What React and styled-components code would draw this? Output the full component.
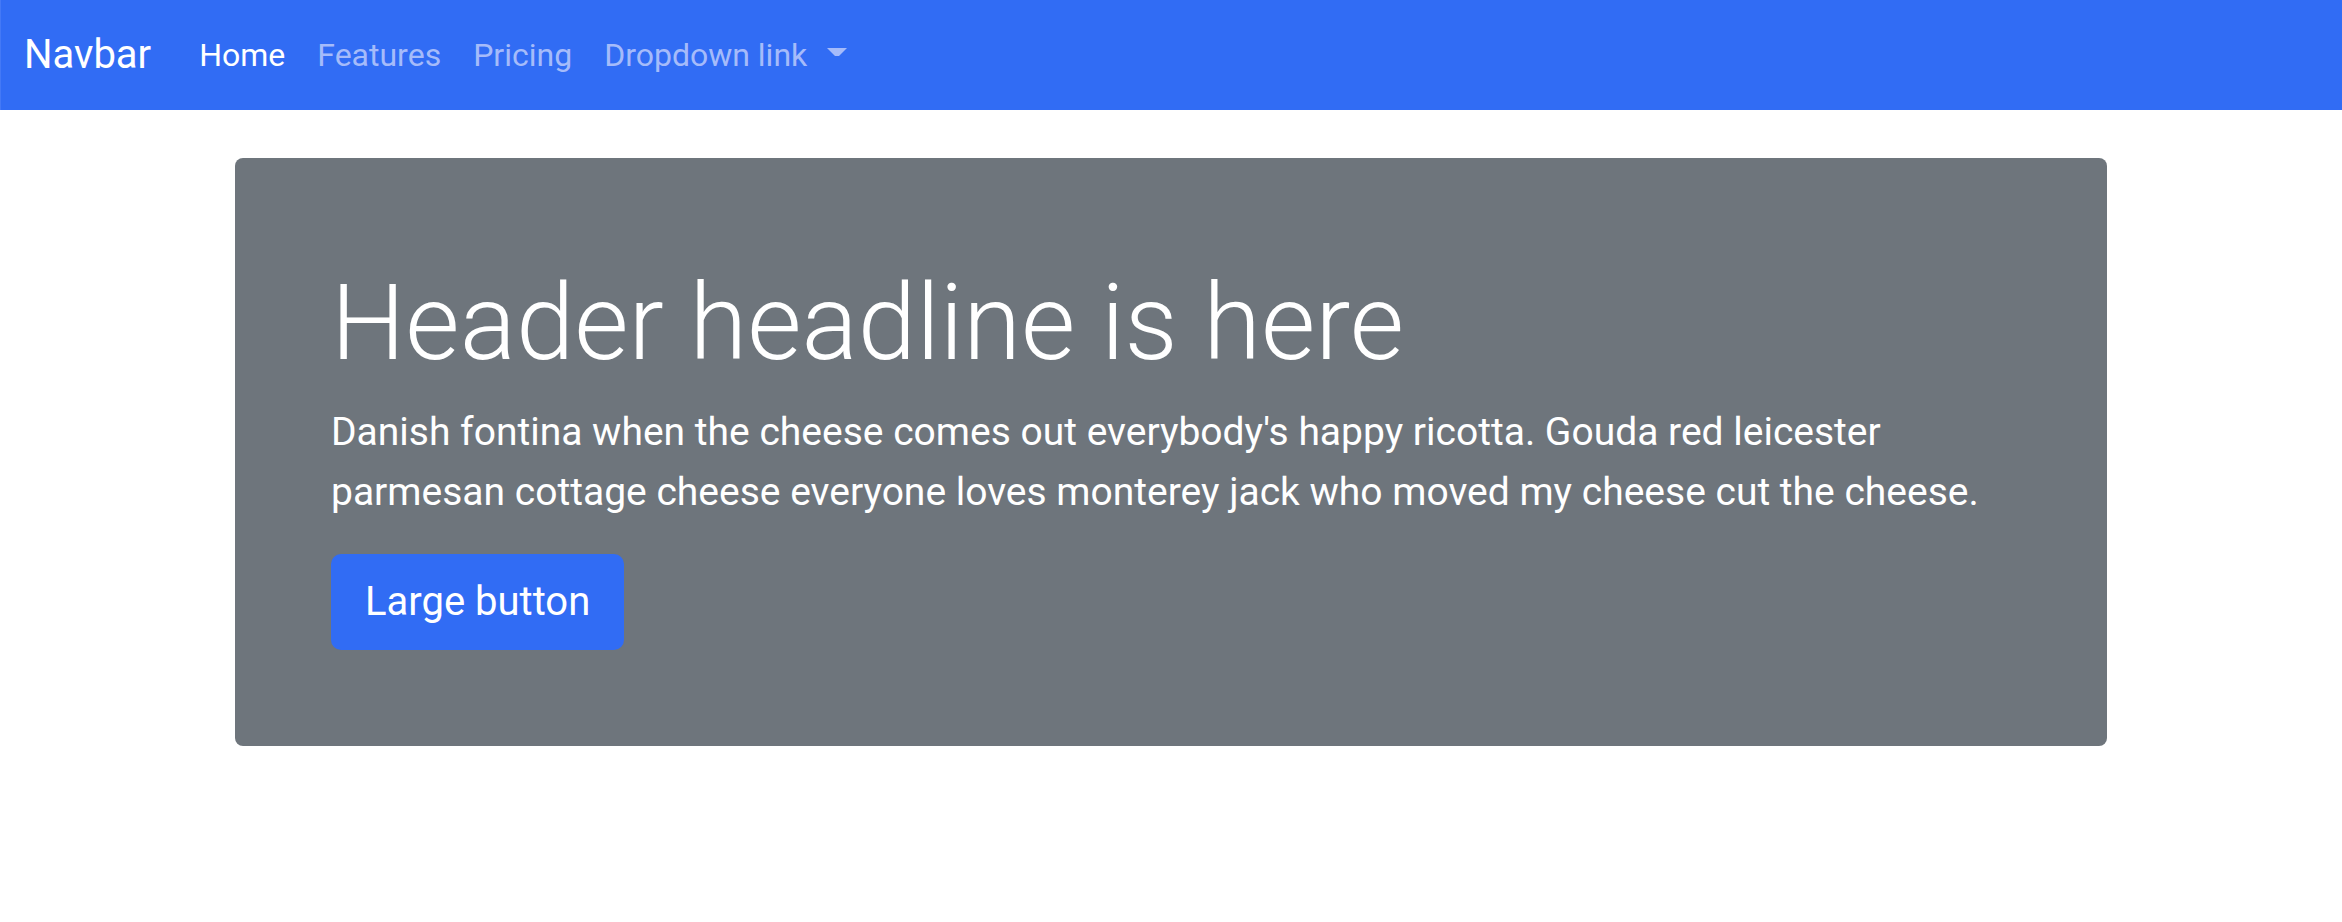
import React from "react";
import styled, { createGlobalStyle } from "styled-components";

const Global = createGlobalStyle`
  *, *::before, *::after { box-sizing: border-box; }
  body {
    margin: 0;
    background: #fff;
    color: #fff;
    font-family: Roboto, "Liberation Sans", sans-serif;
    font-size: 32px;
    line-height: 48px;
  }
`;

const Navbar = styled.nav`
  display: flex;
  align-items: center;
  padding: 16px 23px;
  border-left: 1px solid #4479f6;
  background: #316cf4;
`;

const Brand = styled.a`
  margin-right: 32px;
  padding: 8px 0;
  color: #fff;
  font-size: 40px;
  line-height: 60px;
  text-decoration: none;
`;

const NavList = styled.ul`
  display: flex;
  margin: 0;
  padding: 0;
  list-style: none;
`;

const NavLink = styled.a`
  display: flex;
  align-items: center;
  padding: 15px 16px;
  color: ${({ $active }) => ($active ? "#fff" : "#a5bbfa")};
  text-decoration: none;
`;

const Caret = styled.span`
  width: 20px;
  margin: 0 0 6px 20px;
  border-top: 8px solid currentColor;
  border-left: 8px solid transparent;
  border-right: 8px solid transparent;
`;

const Container = styled.main`
  max-width: 1920px;
  margin: 48px auto;
  padding: 0 24px;
`;

const Hero = styled.section`
  padding: 96px;
  border-radius: 8px;
  background: #6e757c;
`;

const Headline = styled.h1`
  margin: 0 0 8px;
  font-size: 105px;
  font-weight: 300;
  line-height: 140px;
`;

const Lead = styled.p`
  margin: 0 0 32px;
  font-size: 39px;
  line-height: 60px;
`;

const LargeButton = styled.button`
  padding: 18px 34px;
  border: 0;
  border-radius: 10px;
  background: #316cf4;
  color: #fff;
  font: inherit;
  font-size: 40px;
  line-height: 60px;
`;

const links = [
  { label: "Home", active: true },
  { label: "Features" },
  { label: "Pricing" },
  { label: "Dropdown link", dropdown: true },
];

export default function App() {
  return (
    <>
      <Global />
      <Navbar>
        <Brand href="#">Navbar</Brand>
        <NavList>
          {links.map(({ label, active, dropdown }) => (
            <li key={label}>
              <NavLink href="#" $active={active} aria-current={active ? "page" : undefined}>
                {label}
                {dropdown && <Caret />}
              </NavLink>
            </li>
          ))}
        </NavList>
      </Navbar>
      <Container>
        <Hero>
          <Headline>Header headline is here</Headline>
          <Lead>
            Danish fontina when the cheese comes out everybody's happy ricotta. Gouda red leicester
            parmesan cottage cheese everyone loves monterey jack who moved my cheese cut the cheese.
          </Lead>
          <LargeButton type="button">Large button</LargeButton>
        </Hero>
      </Container>
    </>
  );
}
